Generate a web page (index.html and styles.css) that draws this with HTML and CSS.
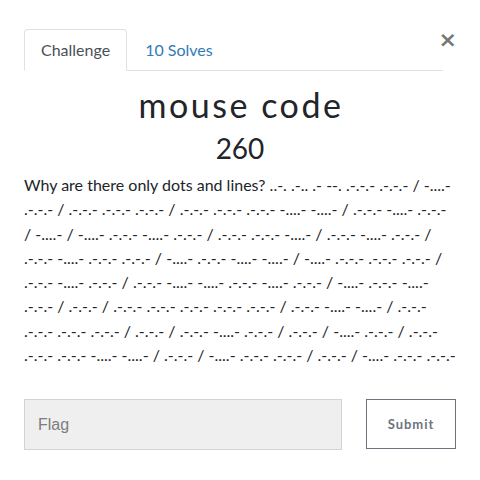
FILE: index.html
```html
<!DOCTYPE html>
<html>
<head>
<meta charset="utf-8">
<link rel="stylesheet" href="styles.css">
</head>
<body>
<div class="modal">
  <div class="tabs">
    <div class="tab active">Challenge</div>
    <div class="tab link">10 Solves</div>
  </div>
  <button class="close">&times;</button>
  <h2 class="title">mouse code</h2>
  <h3 class="points">260</h3>
  <p class="desc">Why are there only dots and lines? ..-. .-.. .- --. .-.-.- .-.-.- / -....-<br>.-.-.- / .-.-.- .-.-.- .-.-.- / .-.-.- .-.-.- .-.-.- -....- -....- / .-.-.- -....- .-.-.-<br>/ -....- / -....- .-.-.- -....- .-.-.- / .-.-.- .-.-.- -....- / .-.-.- -....- .-.-.- /<br>.-.-.- -....- .-.-.- .-.-.- / -....- .-.-.- -....- -....- / -....- .-.-.- .-.-.- .-.-.- /<br>.-.-.- -....- .-.-.- / .-.-.- -....- -....- .-.-.- -....- .-.-.- / -....- .-.-.- -....-<br>.-.-.- / .-.-.- / .-.-.- .-.-.- .-.-.- .-.-.- .-.-.- / .-.-.- -....- -....- / .-.-.-<br>.-.-.- .-.-.- .-.-.- / .-.-.- / .-.-.- -....- .-.-.- / .-.-.- / -....- .-.-.- / .-.-.-<br>.-.-.- .-.-.- -....- -....- / .-.-.- / -....- .-.-.- .-.-.- / .-.-.- / -....- .-.-.- .-.-.-</p>
  <form class="submit-row">
    <input class="flag" type="text" placeholder="Flag">
    <button class="submit" type="button">Submit</button>
  </form>
</div>
</body>
</html>
```
FILE: styles.css
```css
body {
  margin: 0;
  background: #fff;
  font-family: Lato, "Liberation Sans", sans-serif;
  color: #212529;
}
.modal {
  position: relative;
  padding: 29px 24px 0 24px;
}
.tabs {
  display: flex;
  margin-right: 13px;
  border-bottom: 1px solid #dee2e6;
}
.tab {
  font-size: 16px;
  height: 40px;
  line-height: 40px;
  padding: 0 16px;
  border: 1px solid transparent;
  border-radius: 4px 4px 0 0;
  margin-bottom: -1px;
}
.tab.active {
  color: #495057;
  border-color: #dee2e6 #dee2e6 #fff;
  background: #fff;
}
.tab.link {
  color: #337ab7;
  padding: 0 17px;
}
.close {
  position: absolute;
  top: 29px;
  right: 23px;
  border: 0;
  background: none;
  padding: 0;
  font-family: "DejaVu Sans", sans-serif;
  font-size: 22px;
  font-weight: bold;
  color: #777;
  line-height: 22px;
}
.title {
  margin: 14px 0 0;
  padding-left: 2px;
  text-align: center;
  font-weight: 400;
  font-size: 34px;
  letter-spacing: 2.5px;
  line-height: 40px;
}
.points {
  margin: 4px 0 0;
  text-align: center;
  font-weight: 400;
  font-size: 28px;
  line-height: 38px;
}
.desc {
  margin: 6px 0 0;
  font-size: 16px;
  line-height: 24.3px;
  white-space: nowrap;
  color: #212529;
}
.submit-row {
  display: flex;
  gap: 24px;
  margin-top: 32px;
}
.flag {
  flex: 0 0 318px;
  height: 51px;
  box-sizing: border-box;
  background: #efefef;
  border: 1px solid #ced4da;
  padding: 0 13px;
  font-family: "Liberation Sans", Arial, sans-serif;
  font-size: 16px;
  color: #495057;
}
.flag::placeholder {
  color: #7d7d7d;
}
.submit {
  width: 92px;
  height: 50px;
  background: #fff;
  border: 1px solid #6c757d;
  font-family: Lato, sans-serif;
  font-weight: 700;
  font-size: 13px;
  letter-spacing: 1px;
  color: #6c757d;
}
```
